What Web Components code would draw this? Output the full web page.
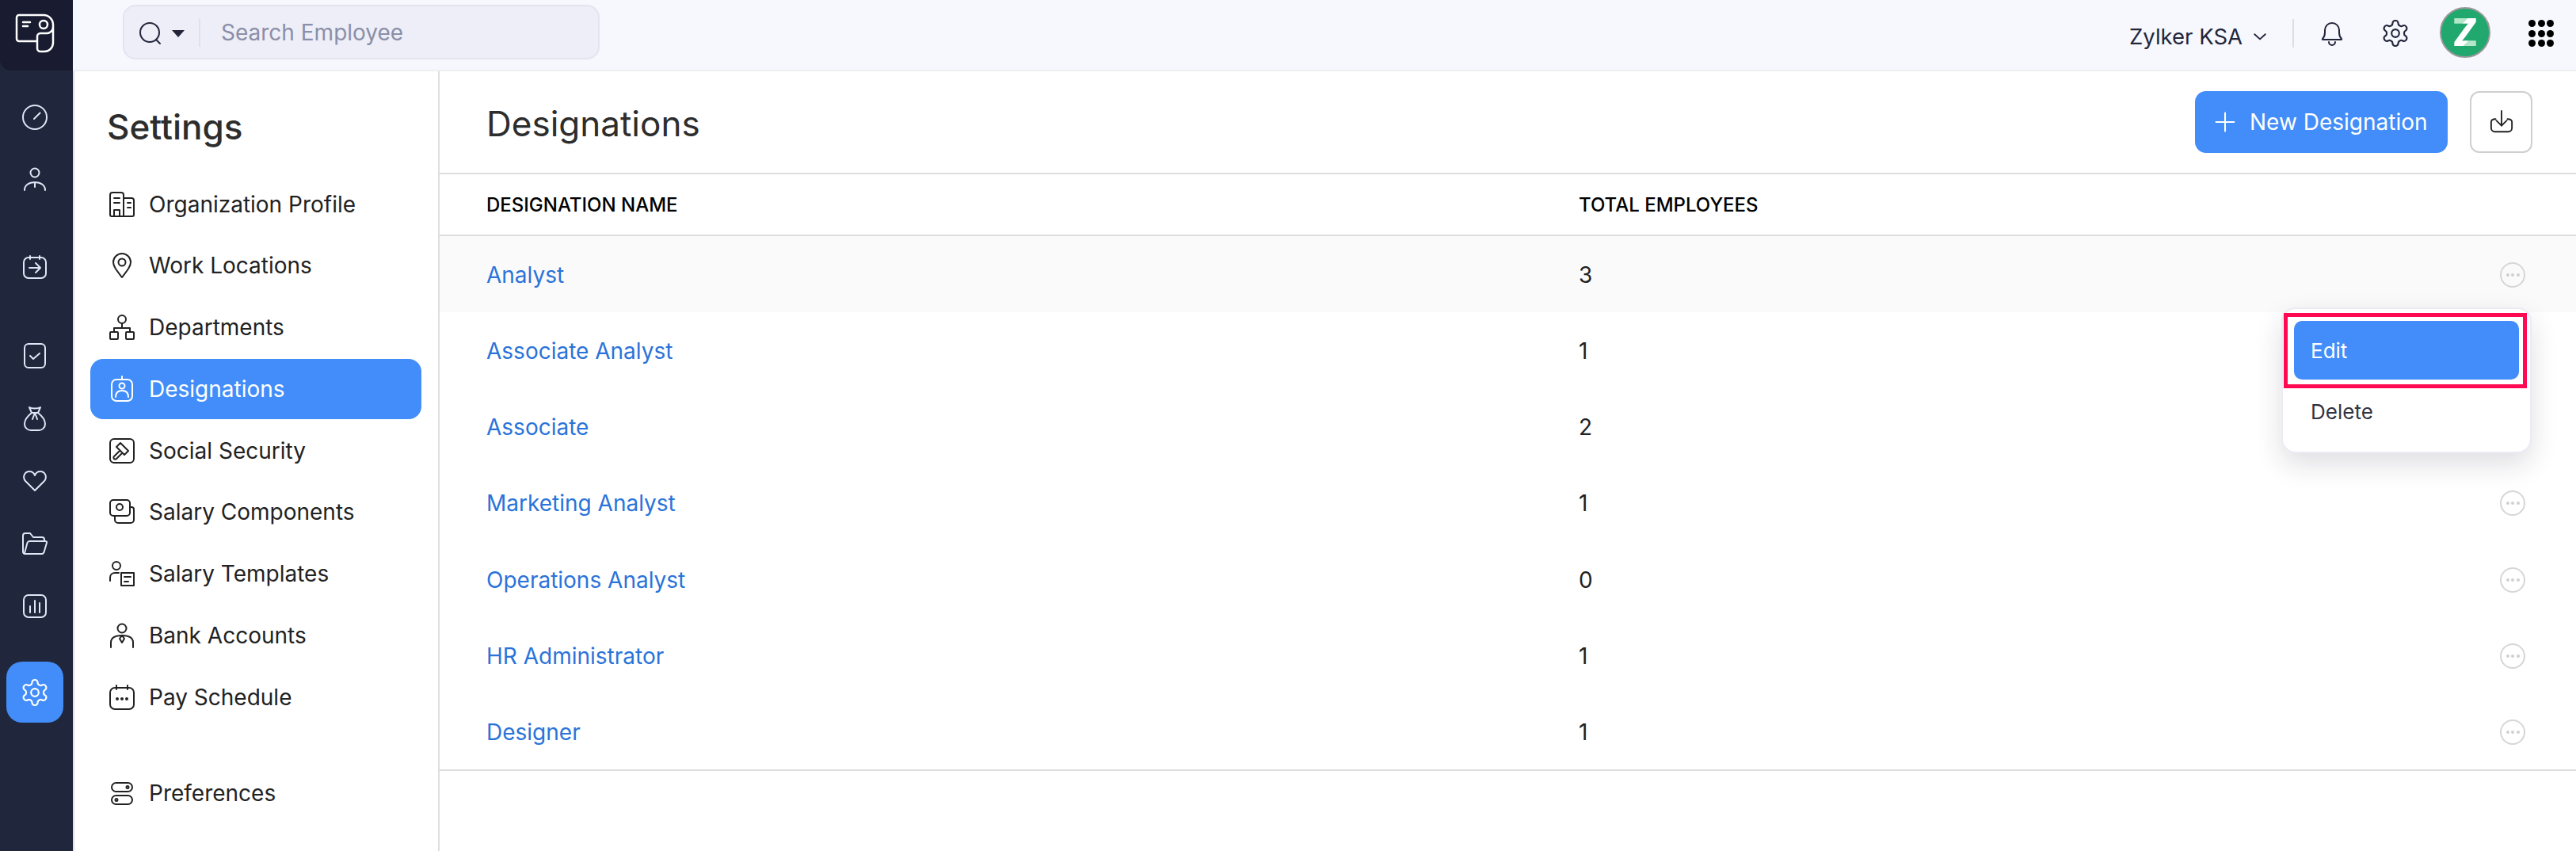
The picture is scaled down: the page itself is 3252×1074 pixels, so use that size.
<!DOCTYPE html>
<html lang="en">
<head>
<meta charset="utf-8">
<title>Designations</title>
<style>
  html, body { margin: 0; height: 100%; overflow: hidden; background: #fff; }
  body { font-family: Inter, "Liberation Sans", sans-serif; color: #222; }
</style>
</head>
<body>
<hr-app></hr-app>
<script>
const GEAR = "M12.22 2h-.44a2 2 0 0 0-2 2v.18a2 2 0 0 1-1 1.73l-.43.25a2 2 0 0 1-2 0l-.15-.08a2 2 0 0 0-2.73.73l-.22.38a2 2 0 0 0 .73 2.73l.15.1a2 2 0 0 1 1 1.72v.51a2 2 0 0 1-1 1.74l-.15.09a2 2 0 0 0-.73 2.73l.22.38a2 2 0 0 0 2.73.73l.15-.08a2 2 0 0 1 2 0l.43.25a2 2 0 0 1 1 1.73V20a2 2 0 0 0 2 2h.44a2 2 0 0 0 2-2v-.18a2 2 0 0 1 1-1.73l.43-.25a2 2 0 0 1 2 0l.15.08a2 2 0 0 0 2.73-.73l.22-.39a2 2 0 0 0-.73-2.73l-.15-.08a2 2 0 0 1-1-1.74v-.5a2 2 0 0 1 1-1.74l.15-.09a2 2 0 0 0 .73-2.73l-.22-.38a2 2 0 0 0-2.73-.73l-.15.08a2 2 0 0 1-2 0l-.43-.25a2 2 0 0 1-1-1.73V4a2 2 0 0 0-2-2z";

// every icon sits in a 32x32 box unless it says otherwise
const ICONS = {
  logo: `<path d="M45 52H22a3 3 0 0 1-3-3V22a3 3 0 0 1 3-3h31a12 12 0 0 1 12 12v23a11 11 0 0 1-11 11h-5a4 4 0 0 1-4-4V46a4 4 0 0 1 4-4h8a8 8 0 0 0 8-8"/><circle cx="53" cy="31" r="5"/><path d="M27 28h9M27 33h6"/>`,
  clock: `<circle cx="16" cy="16" r="15"/><path d="M15 18l7.5-7.5"/>`,
  person: `<circle cx="16" cy="8" r="5.5"/><path d="M3 30c0-6 5-10 13-10s13 4 13 10M16 20v6"/>`,
  leave: `<rect x="2" y="4" width="28" height="26" rx="6"/><path d="M10 2v4M22 2v4M9 17h14M17 11l6 6-6 6"/>`,
  check: `<rect x="3" y="1" width="26" height="30" rx="5"/><path d="M10 16l4 4 8-7"/>`,
  bag: `<path d="M9 2c3 2 11 2 14 0l-3 7c5 4 9 9 9 14 0 5-4 8-8 8H11c-4 0-8-3-8-8 0-5 4-10 9-14Z"/><path d="M12 9h8M16 9l-3 8M16 9l3 8"/>`,
  heart: `<path d="M16 28 4 16C0 11 3 4 9 4c3 0 6 2 7 5 1-3 4-5 7-5 6 0 9 7 5 12Z"/>`,
  folder: `<path d="M4 29c-2 0-3-1-3-3V6c0-2 1-3 3-3h6l4 5h11c2 0 3 1 3 3v2"/><path d="M4 29h21c1 0 2-1 2.5-2L31 15c.3-1-.5-2-1.5-2H9c-1 0-2 1-2.5 2L3 28"/>`,
  chart: `<rect x="2" y="2" width="28" height="28" rx="6"/><path d="M10 24v-8M16 24V9M22 24V12"/>`,
  gear: `<g transform="translate(-3.2 -3.2) scale(1.6)"><path stroke-width="1.35" d="${GEAR}"/><circle stroke-width="1.35" cx="12" cy="12" r="3"/></g>`,
  org: `<path d="M18 31V4a3 3 0 0 0-3-3H4a3 3 0 0 0-3 3v25a2 2 0 0 0 2 2h26a2 2 0 0 0 2-2V11a3 3 0 0 0-3-3H18"/><path d="M6 8h7M6 14h7M23 14h4M23 20h4M6 31v-8h7v8"/>`,
  pin: `<path d="M16 31C9 22 5 17 5 12a11 11 0 0 1 22 0c0 5-4 10-11 19Z"/><circle cx="16" cy="12" r="4.5"/>`,
  dept: `<circle cx="16" cy="6" r="5"/><path d="M16 11v6M6 22v-5h20v5"/><rect x="1" y="22" width="10" height="9" rx="1"/><rect x="21" y="22" width="10" height="9" rx="1"/>`,
  badge: `<rect x="3" y="4" width="26" height="27" rx="6"/><path d="M16 0v4M8 26c0-5 3-8 8-8s8 3 8 8"/><circle cx="16" cy="12" r="3.5"/>`,
  gavel: `<rect x="1" y="1" width="30" height="30" rx="5"/><path d="M14 6l10 10-5 5L9 11ZM13 16l-7 7a2 2 0 0 0 3 3l7-7"/>`,
  money: `<rect x="1" y="1" width="25" height="20" rx="4"/><circle cx="13" cy="10" r="4"/><path d="M7 21v5a4 4 0 0 0 4 4h16a4 4 0 0 0 4-4V13a3 3 0 0 0-3-3h-2"/>`,
  template: `<circle cx="9" cy="6" r="5"/><path d="M1 25v-4c0-4 3-6 6-6h5"/><rect x="15" y="15" width="16" height="16"/><path d="M19 20h8M19 26h5"/>`,
  bank: `<circle cx="16" cy="7" r="5.5"/><path d="M2 31v-6c0-6 5-9 14-9s14 3 14 9v6M16 16l-3 4 3 5 3-5Z"/>`,
  pay: `<rect x="1" y="4" width="30" height="27" rx="6"/><path d="M9 1v5M23 1v5"/><circle cx="10" cy="18" r="1" /><circle cx="16" cy="18" r="1"/><circle cx="22" cy="18" r="1"/>`,
  prefs: `<rect x="3" y="3" width="26" height="11" rx="5.5"/><rect x="3" y="19" width="26" height="11" rx="5.5"/><circle cx="23" cy="8.5" r="1.5"/><circle cx="9" cy="24.5" r="1.5"/>`,
  bell: `<path d="M4 23c2-2 3-4 3-8v-3a9 9 0 0 1 18 0v3c0 4 1 6 3 8 .5.5 0 1-1 1H5c-1 0-1.5-.5-1-1Z"/><path d="M12 27a4 4 0 0 0 8 0"/>`,
  search: `<circle cx="14" cy="14" r="12"/><path d="M22 23l5 5"/>`,
  download: `<path d="M16 1v20M9 14l7 7 7-7M8 12c-3 0-6 1-6 4v8a5 5 0 0 0 5 5h18a5 5 0 0 0 5-5v-8c0-3-3-4-6-4"/>`,
  plus: `<path d="M16 3v26M3 16h26"/>`,
  chevron: `<path d="M4 11l12 11 12-11"/>`,
};

class AppIcon extends HTMLElement {
  connectedCallback() {
    const name = this.getAttribute("name");
    const size = this.getAttribute("size") || 32;
    const box = this.getAttribute("box") || "0 0 32 32";
    this.attachShadow({ mode: "open" }).innerHTML = `
      <style>
        :host { display: block; width: ${size}px; height: ${size}px; flex: none; }
        svg { display: block; width: 100%; height: 100%; overflow: visible; fill: none; stroke: currentColor;
          stroke-width: var(--stroke, 2); stroke-linecap: round; stroke-linejoin: round; }
      </style>
      <svg viewBox="${box}">${ICONS[name]}</svg>`;
  }
}

class RailItem extends HTMLElement {
  connectedCallback() {
    this.attachShadow({ mode: "open" }).innerHTML = `
      <style>
        :host { display: flex; align-items: center; justify-content: center; height: var(--h, 78px);
          padding-right: 4px; color: #dfe6f5; }
      </style>
      <app-icon name="${this.getAttribute("icon")}"></app-icon>`;
  }
}

class AppRail extends HTMLElement {
  connectedCallback() {
    this.attachShadow({ mode: "open" }).innerHTML = `
      <style>
        :host { display: block; width: 92px; flex: none; background: #20263b; }
        .brand { box-sizing: border-box; height: 89px; padding: 0 4px 5px 0; background: #191c30; border-radius: 0 0 0 14px;
          display: flex; align-items: center; justify-content: center; color: #fff; --stroke: 2.5; margin-bottom: 20px; }
        .group { margin-bottom: 33px; }
        .group.tight { --h: 79px; margin-bottom: 31px; }
        .active { width: 72px; height: 77px; margin-left: 8px; border-radius: 20px;
          background: #428df9; display: flex; align-items: center; justify-content: center; color: #fff; }
      </style>
      <div class="brand"><app-icon name="logo" size="48" box="18 18 48 48"></app-icon></div>
      <div class="group"><rail-item icon="clock"></rail-item><rail-item icon="person"></rail-item></div>
      <div class="group"><rail-item icon="leave"></rail-item></div>
      <div class="group tight">
        <rail-item icon="check"></rail-item><rail-item icon="bag"></rail-item><rail-item icon="heart"></rail-item>
        <rail-item icon="folder"></rail-item><rail-item icon="chart"></rail-item>
      </div>
      <div class="active"><app-icon name="gear"></app-icon></div>`;
  }
}

class AppTopbar extends HTMLElement {
  connectedCallback() {
    this.attachShadow({ mode: "open" }).innerHTML = `
      <style>
        :host { display: flex; align-items: center; flex: none; box-sizing: border-box; height: 90px;
          padding: 0 28px 4px 63px; background: #f6f8fe; border-bottom: 2px solid #eeeff3; }
        .search { box-sizing: border-box; width: 602px; height: 69px; margin-top: -3px; display: flex; align-items: center;
          padding-left: 18px; background: #edeef7; border: 2px solid #e3e4f0; border-radius: 16px; color: #23263a; }
        .search app-icon { margin-top: 5px; }
        .caret { width: 0; height: 0; margin: 4px 0 0 10px; border: 8px solid transparent; border-top: 9px solid #23263a; border-bottom: 0; }
        .sep { width: 2px; height: 36px; margin: 0 26px 0 18px; background: #e0e1ec; }
        .hint { font-size: 28px; color: #8b8fa8; }
        .right { margin-left: auto; display: flex; align-items: center; color: #23263a; }
        .org { font-size: 27.5px; padding-top: 8px; }
        .chev { margin: 8px 0 0 13px; }
        .divider { width: 2px; height: 36px; margin: 0 32px 0 32px; background: #dcdde4; }
        .gear { margin: 0 0 0 48px; }
        .avatar { box-sizing: border-box; width: 64px; height: 64px; margin: -3px 0 0 40px; border-radius: 50%;
          border: 2px solid #999; background: #21a86e; display: flex; align-items: center; justify-content: center;
          font-size: 48px; font-weight: 800; line-height: 1; }
        .avatar span { background: linear-gradient(135deg, #b3e6ca 32%, #fff 32% 68%, #b3e6ca 68%);
          -webkit-background-clip: text; background-clip: text; color: transparent; }
        .apps { margin-left: 48px; display: grid; grid-template-columns: repeat(3, 9px); gap: 3.5px 2.5px; }
        .apps i { width: 9px; height: 9px; border-radius: 50%; background: #000; }
      </style>
      <div class="search">
        <app-icon name="search"></app-icon>
        <span class="caret"></span>
        <span class="sep"></span>
        <span class="hint">Search Employee</span>
      </div>
      <div class="right">
        <span class="org">Zylker KSA</span>
        <app-icon class="chev" name="chevron" size="18" style="--stroke:3.4"></app-icon>
        <span class="divider"></span>
        <app-icon name="bell"></app-icon>
        <app-icon class="gear" name="gear"></app-icon>
        <div class="avatar"><span>Z</span></div>
        <div class="apps"><i></i><i></i><i></i><i></i><i></i><i></i><i></i><i></i><i></i></div>
      </div>`;
  }
}

class NavItem extends HTMLElement {
  connectedCallback() {
    this.attachShadow({ mode: "open" }).innerHTML = `
      <style>
        :host { display: flex; align-items: center; gap: 18px; height: 76px; padding-left: 24px; border-radius: 16px;
          font-size: 28px; color: #222; }
        :host([active]) { background: #428df9; color: #fff; }
      </style>
      <app-icon name="${this.getAttribute("icon")}"></app-icon>
      <slot></slot>`;
  }
}

class SettingsNav extends HTMLElement {
  connectedCallback() {
    this.attachShadow({ mode: "open" }).innerHTML = `
      <style>
        :host { display: block; box-sizing: border-box; width: 463px; flex: none; padding: 0 21px 0 20px;
          border-left: 2px solid #dedede; border-right: 2px solid #dedede; }
        h1 { margin: 0; padding: 44px 0 33.5px 21px; font-size: 44px; line-height: 52px; font-weight: 500; color: #2d2d2d; }
        .list { display: flex; flex-direction: column; gap: 1.75px; }
        .spacer { height: 42px; }
      </style>
      <h1>Settings</h1>
      <div class="list">
        <nav-item icon="org">Organization Profile</nav-item>
        <nav-item icon="pin">Work Locations</nav-item>
        <nav-item icon="dept">Departments</nav-item>
        <nav-item icon="badge" active>Designations</nav-item>
        <nav-item icon="gavel">Social Security</nav-item>
        <nav-item icon="money">Salary Components</nav-item>
        <nav-item icon="template">Salary Templates</nav-item>
        <nav-item icon="bank">Bank Accounts</nav-item>
        <nav-item icon="pay">Pay Schedule</nav-item>
        <div class="spacer"></div>
        <nav-item icon="prefs">Preferences</nav-item>
      </div>`;
  }
}

class RowMenu extends HTMLElement {
  connectedCallback() {
    this.attachShadow({ mode: "open" }).innerHTML = `
      <style>
        :host { position: absolute; z-index: 2; top: 90px; right: 56px; box-sizing: border-box; width: 316px; height: 184px;
          padding: 15px 14px; background: #fff; border: 2px solid #ecebf3; border-radius: 18px;
          box-shadow: 0 14px 34px rgba(30, 30, 50, .14); font-size: 26px; }
        div { display: flex; align-items: center; height: 74px; padding-left: 21px; border-radius: 10px; color: #33333f; }
        .edit { background: #428df9; color: #fff; margin-bottom: 3px; }
        .mark { position: absolute; left: 1px; top: 5px; box-sizing: border-box; width: 307px; height: 95px;
          border: 5px solid #ff0a52; }
      </style>
      <div class="edit">Edit</div>
      <div>Delete</div>
      <span class="mark"></span>`;
  }
}

class DesignationRow extends HTMLElement {
  connectedCallback() {
    this.attachShadow({ mode: "open" }).innerHTML = `
      <style>
        :host { display: flex; align-items: center; position: relative; box-sizing: border-box; height: 96.15px;
          padding: 2px 64px 0 59px; font-size: 28px; color: #222; }
        :host([hover]) { background: #fafafa; }
        a { width: 1379px; color: #2a73d9; }
        .count { flex: 1; }
        .more { box-sizing: border-box; width: 32px; height: 32px; border: 2px solid #d6d6d6; border-radius: 50%;
          display: flex; align-items: center; justify-content: center; gap: 2.5px; }
        .more i { width: 4px; height: 4px; border-radius: 50%; background: #cfcfcf; }
      </style>
      <a>${this.getAttribute("name")}</a>
      <span class="count">${this.getAttribute("count")}</span>
      <span class="more"><i></i><i></i><i></i></span>
      <slot></slot>`;
  }
}

class DesignationsView extends HTMLElement {
  connectedCallback() {
    this.attachShadow({ mode: "open" }).innerHTML = `
      <style>
        :host { display: block; flex: 1; min-width: 0; }
        header { display: flex; align-items: center; box-sizing: border-box; height: 130px; padding: 0 55px 0 59px;
          border-bottom: 2px solid #dedede; }
        h2 { margin: 3px auto 0 0; font-size: 44px; font-weight: 400; color: #2d2d2d; }
        .primary { box-sizing: border-box; width: 319px; display: flex; align-items: center; gap: 17px; height: 78px; padding-left: 24px;
          border-radius: 14px; background: #428df9; color: #fff; font-size: 28px; font-weight: 400; --stroke: 2.4; }
        .export { box-sizing: border-box; width: 79px; height: 78px; margin-left: 28px; display: flex; align-items: center;
          justify-content: center; border: 2px solid #cfcfcf; border-radius: 12px; color: #222; }
        .head { display: flex; align-items: center; box-sizing: border-box; height: 78px; padding-left: 59px;
          border-bottom: 2px solid #dedede; font-size: 24px; font-weight: 500; color: #000; }
        .head span:first-child { width: 1379px; }
        .rows { border-bottom: 2px solid #dedede; }
      </style>
      <header>
        <h2>Designations</h2>
        <div class="primary"><app-icon name="plus" size="28"></app-icon>New Designation</div>
        <div class="export"><app-icon name="download" size="30"></app-icon></div>
      </header>
      <div class="head"><span>DESIGNATION NAME</span><span>TOTAL EMPLOYEES</span></div>
      <div class="rows">
        <designation-row name="Analyst" count="3" hover><row-menu></row-menu></designation-row>
        <designation-row name="Associate Analyst" count="1"></designation-row>
        <designation-row name="Associate" count="2"></designation-row>
        <designation-row name="Marketing Analyst" count="1"></designation-row>
        <designation-row name="Operations Analyst" count="0"></designation-row>
        <designation-row name="HR Administrator" count="1"></designation-row>
        <designation-row name="Designer" count="1"></designation-row>
      </div>`;
  }
}

class HrApp extends HTMLElement {
  connectedCallback() {
    this.attachShadow({ mode: "open" }).innerHTML = `
      <style>
        :host { display: flex; height: 1074px; overflow: hidden; }
        .column { flex: 1; min-width: 0; display: flex; flex-direction: column; }
        .body { flex: 1; display: flex; min-height: 0; }
      </style>
      <app-rail></app-rail>
      <div class="column">
        <app-topbar></app-topbar>
        <div class="body"><settings-nav></settings-nav><designations-view></designations-view></div>
      </div>`;
  }
}

customElements.define("app-icon", AppIcon);
customElements.define("rail-item", RailItem);
customElements.define("app-rail", AppRail);
customElements.define("app-topbar", AppTopbar);
customElements.define("nav-item", NavItem);
customElements.define("settings-nav", SettingsNav);
customElements.define("row-menu", RowMenu);
customElements.define("designation-row", DesignationRow);
customElements.define("designations-view", DesignationsView);
customElements.define("hr-app", HrApp);
</script>
</body>
</html>
